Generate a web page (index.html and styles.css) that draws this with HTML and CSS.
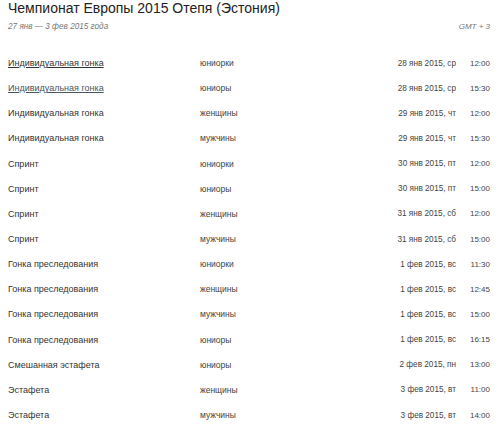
FILE: index.html
```html
<!DOCTYPE html>
<html lang="ru">
<head>
<meta charset="utf-8">
<title>Чемпионат Европы 2015 Отепя (Эстония)</title>
<link rel="stylesheet" href="styles.css">
</head>
<body>
<div class="page">
  <h1 class="title">Чемпионат Европы 2015 Отепя (Эстония)</h1>
  <div class="meta">
    <span class="dates">27 янв — 3 фев 2015 года</span>
    <span class="tz">GMT + 3</span>
  </div>
  <div class="schedule">
    <div class="row"><a class="name link" href="#">Индивидуальная гонка</a><span class="cat">юниорки</span><span class="date">28 янв 2015, ср</span><span class="time">12:00</span></div>
    <div class="row"><a class="name link visited" href="#">Индивидуальная гонка</a><span class="cat">юниоры</span><span class="date">28 янв 2015, ср</span><span class="time">15:30</span></div>
    <div class="row"><span class="name">Индивидуальная гонка</span><span class="cat">женщины</span><span class="date">29 янв 2015, чт</span><span class="time">12:00</span></div>
    <div class="row"><span class="name">Индивидуальная гонка</span><span class="cat">мужчины</span><span class="date">29 янв 2015, чт</span><span class="time">15:30</span></div>
    <div class="row"><span class="name">Спринт</span><span class="cat">юниорки</span><span class="date">30 янв 2015, пт</span><span class="time">12:00</span></div>
    <div class="row"><span class="name">Спринт</span><span class="cat">юниоры</span><span class="date">30 янв 2015, пт</span><span class="time">15:00</span></div>
    <div class="row"><span class="name">Спринт</span><span class="cat">женщины</span><span class="date">31 янв 2015, сб</span><span class="time">12:00</span></div>
    <div class="row"><span class="name">Спринт</span><span class="cat">мужчины</span><span class="date">31 янв 2015, сб</span><span class="time">15:00</span></div>
    <div class="row"><span class="name">Гонка преследования</span><span class="cat">юниорки</span><span class="date">1 фев 2015, вс</span><span class="time">11:30</span></div>
    <div class="row"><span class="name">Гонка преследования</span><span class="cat">женщины</span><span class="date">1 фев 2015, вс</span><span class="time">12:45</span></div>
    <div class="row"><span class="name">Гонка преследования</span><span class="cat">мужчины</span><span class="date">1 фев 2015, вс</span><span class="time">15:00</span></div>
    <div class="row"><span class="name">Гонка преследования</span><span class="cat">юниоры</span><span class="date">1 фев 2015, вс</span><span class="time">16:15</span></div>
    <div class="row"><span class="name">Смешанная эстафета</span><span class="cat">юниоры</span><span class="date">2 фев 2015, пн</span><span class="time">13:00</span></div>
    <div class="row"><span class="name">Эстафета</span><span class="cat">женщины</span><span class="date">3 фев 2015, вт</span><span class="time">11:00</span></div>
    <div class="row"><span class="name">Эстафета</span><span class="cat">мужчины</span><span class="date">3 фев 2015, вт</span><span class="time">14:00</span></div>
  </div>
</div>
</body>
</html>
```

FILE: styles.css
```css
html, body {
  margin: 0;
  padding: 0;
  background: #fff;
}
body {
  font-family: "Liberation Sans", Arial, sans-serif;
  color: #333;
}
.page {
  padding: 0 10px 0 8px;
}
.title {
  margin: 0;
  font-size: 14px;
  font-weight: normal;
  line-height: 16px;
  color: #222;
}
.meta {
  display: flex;
  justify-content: space-between;
  align-items: center;
  margin-top: 4px;
  height: 12px;
  font-size: 8.2px;
  font-style: italic;
  color: #777;
}
.tz {
  font-size: 8px;
}
.schedule {
  margin-top: 18.5px;
}
.row {
  display: flex;
  align-items: center;
  height: 25.15px;
}
.name {
  width: 192px;
  font-size: 9px;
  color: #333;
}
.link {
  color: #333;
  text-decoration: underline;
}
.link.visited {
  color: #4a5560;
}
.cat {
  flex: 1;
  font-size: 8.5px;
  color: #444;
}
.date {
  font-size: 8.2px;
  color: #444;
  text-align: right;
}
.time {
  width: 34px;
  text-align: right;
  font-size: 8px;
  color: #444;
}
```
